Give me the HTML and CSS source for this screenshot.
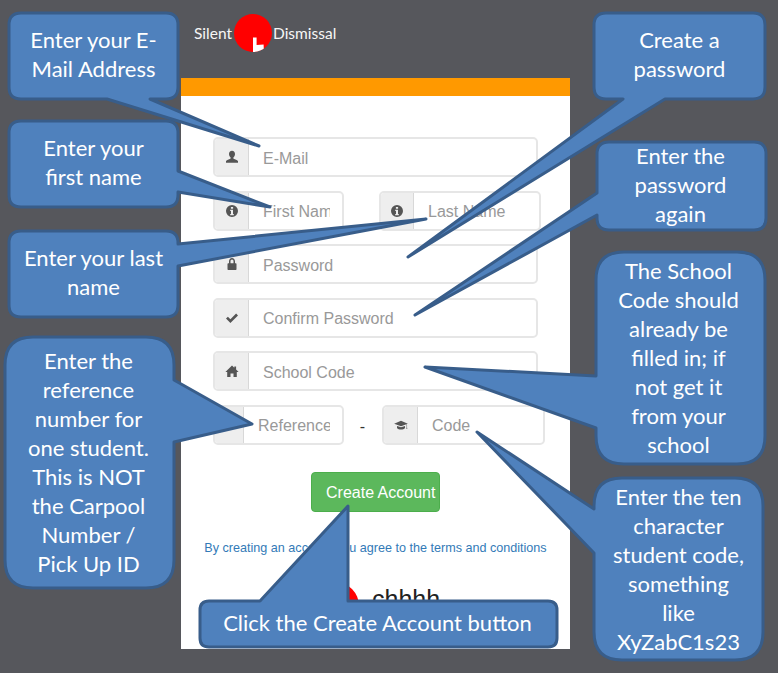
FILE: index.html
```html
<!DOCTYPE html>
<html lang="en">
<head>
<meta charset="utf-8">
<title>Silent Dismissal - Create Account</title>
<link rel="stylesheet" href="styles.css">
</head>
<body>
<main class="stage">
  <header class="brand">
    <span class="brand-word">Silent</span>
    <svg class="brand-mark" viewBox="0 0 38 38" aria-hidden="true">
      <defs><clipPath id="disc"><circle cx="19" cy="19" r="19"/></clipPath></defs>
      <circle cx="19" cy="19" r="19" fill="#ff0000"/>
      <path clip-path="url(#disc)" d="M19 23.500h3.600v7.500l7-.5.400 8.500H19z" fill="#fff"/>
    </svg>
    <span class="brand-word">Dismissal</span>
  </header>

  <section class="card">
    <div class="card-bar"></div>
    <form class="form">
      <div class="row">
        <label class="field field-full">
          <span class="addon"><svg class="icon" viewBox="0 0 14 14"><path d="M7 .8c1.900 0 3 1.400 3 3.300 0 1.500-.7 2.800-1.600 3.500-.2.700 0 1.200.8 1.500 1.700.6 3.400 1.300 3.800 2.200v1.500H1v-1.500c.4-.9 2.100-1.600 3.800-2.200.8-.3 1-.8.800-1.500C4.700 6.900 4 5.600 4 4.100 4 2.200 5.100.8 7 .8z"/></svg></span>
          <input class="input" type="text" placeholder="E-Mail">
        </label>
      </div>
      <div class="row">
        <label class="field field-first">
          <span class="addon"><svg class="icon" viewBox="0 0 14 14"><path fill-rule="evenodd" d="M7 1a6 6 0 1 1 0 12A6 6 0 0 1 7 1zM5.900 2.900v1.900h2.200V2.900zM5.200 5.800v1.200h.8v3H5.200v1.200h3.600V10H8V5.800z"/></svg></span>
          <input class="input" type="text" placeholder="First Name">
        </label>
        <label class="field field-last">
          <span class="addon addon-last"><svg class="icon" viewBox="0 0 14 14"><path fill-rule="evenodd" d="M7 1a6 6 0 1 1 0 12A6 6 0 0 1 7 1zM5.900 2.900v1.900h2.200V2.900zM5.200 5.800v1.200h.8v3H5.200v1.200h3.600V10H8V5.800z"/></svg></span>
          <input class="input" type="text" placeholder="Last Name">
        </label>
      </div>
      <div class="row">
        <label class="field field-full">
          <span class="addon"><svg class="icon" viewBox="0 0 14 14"><path fill-rule="evenodd" d="M4 6.200V4.300C4 2.400 5.300 1 7 1s3 1.400 3 3.300v1.900h.8c.4 0 .7.300.7.700v5.400c0 .4-.3.700-.7.700H3.200c-.4 0-.7-.3-.7-.7V6.900c0-.4.300-.7.700-.7zM5.500 6.200h3V4.300C8.500 3.200 7.900 2.500 7 2.500s-1.500.7-1.500 1.800z"/></svg></span>
          <input class="input" type="password" placeholder="Password">
        </label>
      </div>
      <div class="row">
        <label class="field field-full">
          <span class="addon"><svg class="icon" viewBox="0 0 14 14"><path d="M1 7.600l1.900-1.900 2.500 2.500 5.700-5.700L13 4.400l-7.600 7.500z"/></svg></span>
          <input class="input" type="password" placeholder="Confirm Password">
        </label>
      </div>
      <div class="row">
        <label class="field field-full">
          <span class="addon"><svg class="icon" viewBox="0 0 14 14"><path d="M7 1.500l2.300 2.200V2.500h1.800v3L13.600 8h-1.800v5H8.500V9.400h-3V13H2.200V8H.4z"/></svg></span>
          <input class="input" type="text" placeholder="School Code">
        </label>
      </div>
      <div class="row row-code">
        <label class="field field-first">
          <span class="addon addon-narrow"></span>
          <input class="input" type="text" placeholder="Reference">
        </label>
        <span class="dash">-</span>
        <label class="field field-code">
          <span class="addon"><svg class="icon" viewBox="0 0 16 14"><path d="M8 2.200l7.800 3.300-7.800 3-7.800-3zM3.400 8l4.600 1.700L12.600 8v2.400c-1 1.200-2.700 1.700-4.600 1.700s-3.600-.5-4.600-1.700zM14.400 6.400l.5-.2v3.600l.4 1.500h-1.300l.4-1.500z"/></svg></span>
          <input class="input" type="text" placeholder="Code">
        </label>
      </div>
      <button class="submit" type="button">Create Account</button>
      <p class="terms">By creating an account you agree to the terms and conditions</p>
      <div class="partner">
        <span class="partner-disc"></span>
        <span class="partner-name">chhhh</span>
      </div>
    </form>
  </section>

  <svg class="bubbles" viewBox="0 0 778 673" aria-hidden="true">
    <path d="M21 13H166Q178 13 178 25V87Q178 99 166 99H150L259 146L107 99H21Q9 99 9 87V25Q9 13 21 13Z"/>
    <path d="M21 121H166Q178 121 178 133V171L270 207L178 192V195Q178 207 166 207H21Q9 207 9 195V133Q9 121 21 121Z"/>
    <path d="M21 231H166Q178 231 178 243V244L426 219L178 266V305Q178 317 166 317H21Q9 317 9 305V243Q9 231 21 231Z"/>
    <path d="M33 337H146Q174 337 174 365V380L252 424L174 442V560Q174 588 146 588H33Q5 588 5 560V365Q5 337 33 337Z"/>
    <path d="M606 13H753Q765 13 765 25V87Q765 99 753 99H665L408 257L623 99H606Q594 99 594 87V25Q594 13 606 13Z"/>
    <path d="M609 142H754Q766 142 766 154V218Q766 230 754 230H609Q597 230 597 218V215L415 315L597 193V154Q597 142 609 142Z"/>
    <path d="M624 252H737Q765 252 765 280V436Q765 464 737 464H624Q596 464 596 436V428L425 367L596 376V280Q596 252 624 252Z"/>
    <path d="M622 478H735Q763 478 763 506V632Q763 660 735 660H622Q594 660 594 632V553L477 432L594 509V506Q594 478 622 478Z"/>
    <path d="M209 601H260L348 506V601H548Q557 601 557 610V638Q557 647 548 647H209Q200 647 200 638V610Q200 601 209 601Z"/>
  </svg>

  <p class="note note-email">Enter your E-<br>Mail Address</p>
  <p class="note note-first">Enter your<br>first name</p>
  <p class="note note-last">Enter your last<br>name</p>
  <p class="note note-ref">Enter the<br>reference<br>number for<br>one student.<br>This is NOT<br>the Carpool<br>Number /<br>Pick Up ID</p>
  <p class="note note-pass">Create a<br>password</p>
  <p class="note note-again">Enter the<br>password<br>again</p>
  <p class="note note-school">The School<br>Code should<br>already be<br>filled in; if<br>not get it<br>from your<br>school</p>
  <p class="note note-ten">Enter the ten<br>character<br>student code,<br>something<br>like<br>XyZabC1s23</p>
  <p class="note note-click">Click the Create Account button</p>
</main>
</body>
</html>
```
FILE: styles.css
```css
* { box-sizing: border-box; }

html, body {
  margin: 0;
  height: 100%;
  background: #56575c;
  overflow: hidden;
}

.stage {
  position: relative;
  width: 778px;
  height: 673px;
  padding-left: 181px;
  font-family: "Liberation Sans", Arial, sans-serif;
}

.brand {
  display: flex;
  align-items: center;
  height: 78px;
  padding: 0 0 12px 13px;
}

.brand-word {
  font-family: Lato, sans-serif;
  font-weight: 400;
  font-size: 15.500px;
  color: #f6f6f6;
}

.brand-mark {
  flex: none;
  width: 38px;
  height: 38px;
  margin: 0 1px 0 2px;
}

.card {
  width: 389px;
  height: 571px;
  background: #fff;
  overflow: hidden;
}

.card-bar {
  height: 18px;
  background: #ff9900;
}

.form {
  display: flex;
  flex-direction: column;
  gap: 13.6px;
  padding: 41px 0 0 32px;
}

.row {
  display: flex;
  height: 40px;
  gap: 35px;
}

.row-code { gap: 0; }

.field {
  display: flex;
  height: 40px;
  border: 2px solid #e6e6e6;
  border-radius: 5px;
  overflow: hidden;
  background: #fff;
}

.field-full { width: 325px; }
.field-first { width: 131px; }
.field-last { width: 162px; }
.field-code { width: 163px; }

.addon {
  display: flex;
  flex: none;
  align-items: center;
  justify-content: center;
  width: 34px;
  background: #eeeeee;
  border-right: 1px solid #d8d8d8;
}

.addon-last { width: 33px; }
.addon-narrow { width: 29px; }

.icon {
  width: 14px;
  height: 14px;
  fill: #555555;
}

.input {
  flex: 1;
  min-width: 0;
  height: 100%;
  padding: 3px 12px 0 14px;
  border: 0;
  outline: 0;
  background: transparent;
  font-family: "Liberation Sans", Arial, sans-serif;
  font-size: 16px;
  color: #555;
}

.input::placeholder {
  color: #999999;
  opacity: 1;
}

.dash {
  width: 38px;
  padding: 2px 1px 0 0;
  font-size: 16px;
  line-height: 40px;
  text-align: center;
  color: #333;
}

.submit {
  width: 129px;
  height: 40px;
  margin: 13px 0 0 98px;
  padding: 2px 0 0 14px;
  border: 1px solid #4cae4c;
  border-radius: 4px;
  background: #5cb85c;
  color: #fff;
  font-family: "Liberation Sans", Arial, sans-serif;
  font-size: 16px;
  white-space: nowrap;
  text-align: left;
}

.terms {
  width: 389px;
  margin: 15px 0 0 -32px;
  font-size: 12.600px;
  line-height: 17px;
  text-align: center;
  color: #337ab7;
}

.partner {
  display: flex;
  align-items: flex-start;
  margin: 11px 0 0 98px;
  height: 60px;
}

.partner-disc {
  flex: none;
  width: 48px;
  height: 48px;
  border-radius: 50%;
  background: #ff0000;
}

.partner-name {
  height: 18px;
  margin-left: 13px;
  overflow: hidden;
  font-size: 25px;
  line-height: 34px;
  color: #222;
}

.bubbles {
  position: absolute;
  left: 0;
  top: 0;
  width: 778px;
  height: 673px;
  fill: #4f81bd;
  stroke: #385d8a;
  stroke-width: 3px;
  stroke-linejoin: round;
}

.note {
  position: absolute;
  display: flex;
  align-items: center;
  justify-content: center;
  margin: 0;
  font-family: Lato, sans-serif;
  font-size: 22px;
  line-height: 29px;
  text-align: center;
  color: #fff;
}

.note-email { left: 9px; top: 10px; width: 169px; height: 87px; }
.note-first { left: 9px; top: 118px; width: 169px; height: 87px; }
.note-last { left: 9px; top: 228px; width: 169px; height: 87px; }
.note-ref { left: 4px; top: 335px; width: 169px; height: 253px; }
.note-pass { left: 594px; top: 10px; width: 171px; height: 87px; }
.note-again { left: 596px; top: 139px; width: 169px; height: 90px; }
.note-school { left: 594px; top: 251px; width: 169px; height: 213px; }
.note-ten { left: 594px; top: 477px; width: 169px; height: 184px; }
.note-click { left: 199px; top: 599px; width: 357px; height: 46px; }
```
